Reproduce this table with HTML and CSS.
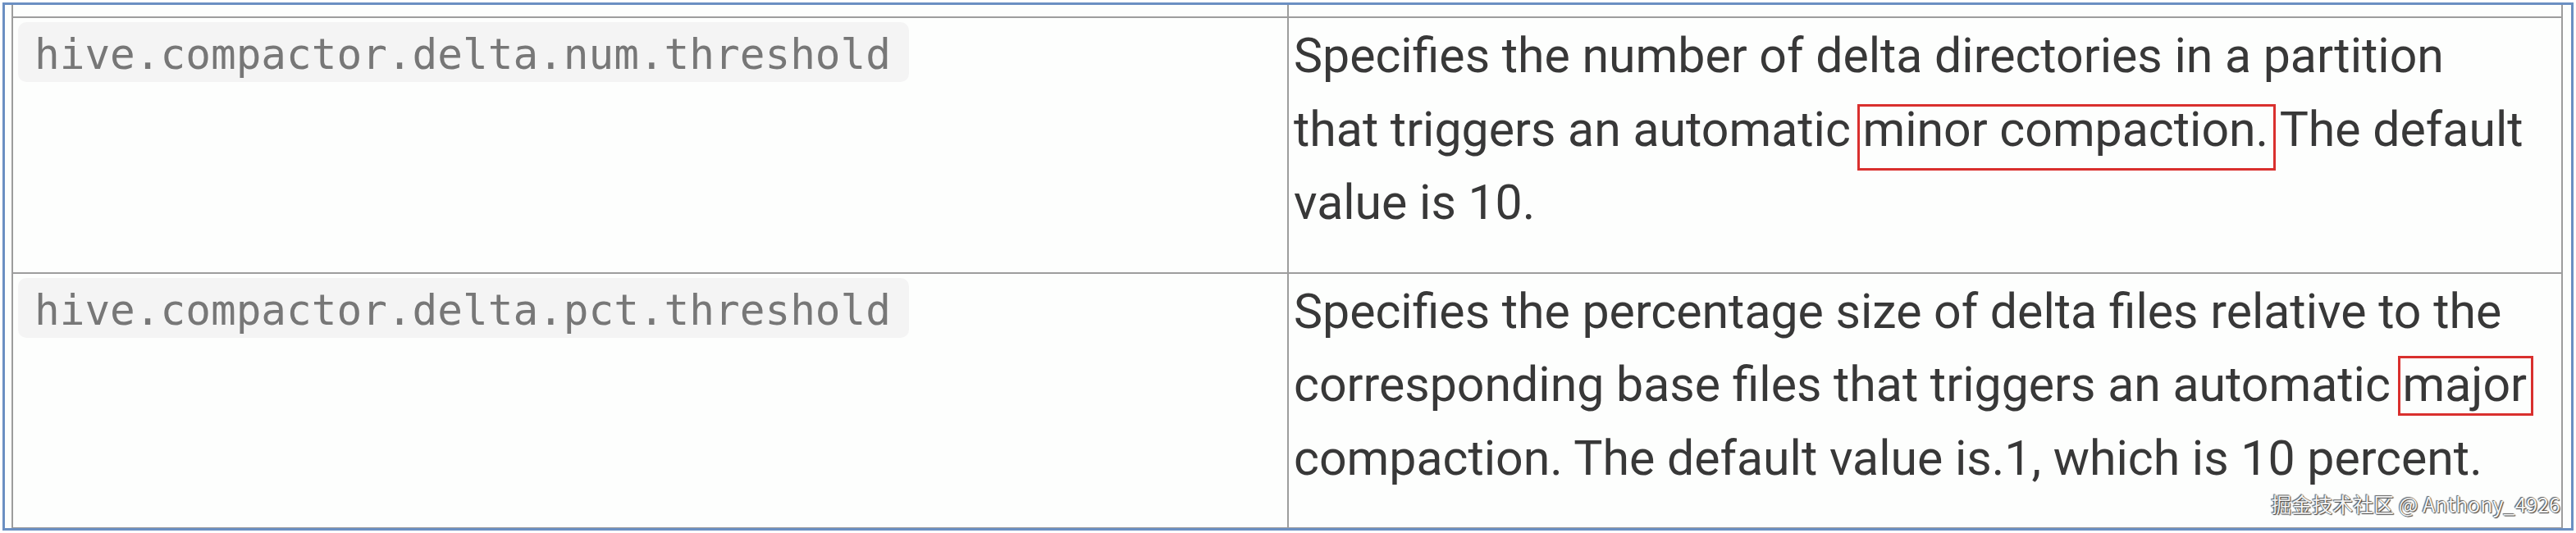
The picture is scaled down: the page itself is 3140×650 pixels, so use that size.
FILE: index.html
```html
<!DOCTYPE html>
<html lang="en">
<head>
<meta charset="utf-8">
<title>Hive compactor thresholds</title>
<link rel="stylesheet" href="styles.css">
</head>
<body>
<div class="frame">
  <table class="props">
    <colgroup><col class="c-key"><col class="c-desc"></colgroup>
    <tr class="stub"><td></td><td></td></tr>
    <tr class="row">
      <td class="key"><code class="prop">hive.compactor.delta.num.threshold</code></td>
      <td class="desc">Specifies the number of delta directories in a partition<br>that triggers an automatic <span class="mark mark-minor">minor compaction.</span> The default<br>value is 10.</td>
    </tr>
    <tr class="row">
      <td class="key"><code class="prop">hive.compactor.delta.pct.threshold</code></td>
      <td class="desc">Specifies the percentage size of delta files relative to the<br>corresponding base files that triggers an automatic <span class="mark mark-major">major</span><br>compaction. The default value is.1, which is 10 percent.</td>
    </tr>
  </table>
  <div class="watermark">掘金技术社区 @ Anthony_4926</div>
</div>
</body>
</html>
```
FILE: styles.css
```css
html, body {
  margin: 0;
  padding: 0;
  background: #ffffff;
}
.frame {
  position: relative;
  margin: 3px;
  height: 638px;
  border: 3px solid #6b8fc2;
  padding: 0 10px 0 8px;
  background: #fdfefd;
  overflow: hidden;
}
.props {
  width: 100%;
  border-collapse: collapse;
  table-layout: fixed;
  border-left: 2px solid #7a7a7a;
  border-right: 2px solid #7a7a7a;
  border-bottom: 2px solid #8a8a8a;
}
.c-key { width: 1555px; }
.props td {
  border: 2px solid #9d9d9d;
  vertical-align: top;
  padding: 0;
}
.stub td {
  border-top: none;
  height: 14px;
}
.key {
  padding: 5px 0 0 6px !important;
}
.prop {
  display: inline-block;
  font-family: "DejaVu Sans Mono", monospace;
  font-size: 51px;
  line-height: 59px;
  color: #777777;
  background: #f4f4f4;
  border-radius: 10px;
  padding: 10px 22px 4px 20px;
}
.desc {
  padding: 1px 0 40px 6px !important;
  font-family: Roboto, "Liberation Sans", sans-serif;
  font-size: 59px;
  line-height: 89.5px;
  color: #383838;
  white-space: nowrap;
}
.mark {
  position: relative;
}
.mark::after {
  content: "";
  position: absolute;
  border: 3px solid #d9302e;
}
.mark-minor::after {
  left: -6px;
  right: -9px;
  top: 4px;
  bottom: -16px;
}
.mark-major::after {
  left: -5px;
  right: -8px;
  top: 0;
  bottom: -4px;
}
.watermark {
  position: absolute;
  right: 13px;
  bottom: 16px;
  font-family: "Noto Sans CJK SC", "Noto Sans", sans-serif;
  font-size: 25px;
  line-height: 28px;
  color: #f4f4f4;
  text-shadow: 0 0 1px #333, 1px 1px 1px #444, -1px -1px 1px #666;
  white-space: nowrap;
}
```
